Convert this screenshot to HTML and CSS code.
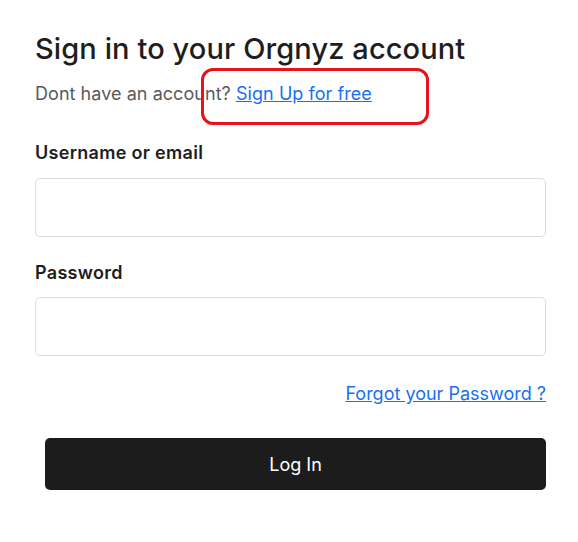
FILE: index.html
```html
<!DOCTYPE html>
<html>
<head>
<meta charset="utf-8">
<link rel="stylesheet" href="styles.css">
</head>
<body>
<main class="page">
  <h1 class="title">Sign in to your Orgnyz account</h1>
  <p class="subtitle">Dont have an account? <a class="link" href="#">Sign Up for free</a></p>
  <div class="highlight"></div>
  <form class="form">
    <label class="label" for="user">Username or email</label>
    <input class="input" id="user" type="text">
    <label class="label" for="pass">Password</label>
    <input class="input input-tight" id="pass" type="password">
    <div class="forgot-row"><a class="link" href="#">Forgot your Password ?</a></div>
    <button class="btn" type="button">Log In</button>
  </form>
</main>
</body>
</html>
```
FILE: styles.css
```css
* { box-sizing: border-box; }
body {
  margin: 0;
  background: #fff;
  font-family: Inter, "Noto Sans", sans-serif;
  color: #1e1e1e;
}
.page {
  position: relative;
  width: 511px;
  margin-left: 35px;
  padding-top: 30px;
}
.title {
  margin: 0;
  font-size: 29px;
  font-weight: 500;
  line-height: 38px;
  letter-spacing: 0.1px;
  color: #1e1e1e;
}
.subtitle {
  margin: 14px 0 0;
  font-size: 18px;
  line-height: 24px;
  letter-spacing: 0.05px;
  color: #5a5a5a;
}
.link {
  color: #1a6ff0;
  text-decoration: underline;
}
.highlight {
  position: absolute;
  left: 166px;
  top: 68px;
  width: 228px;
  height: 57px;
  border: 3px solid #e8121b;
  border-radius: 12px;
}
.form {
  display: flex;
  flex-direction: column;
  margin-top: 35px;
}
.label {
  font-size: 18px;
  font-weight: 600;
  line-height: 24px;
  letter-spacing: 0.3px;
  color: #1e1e1e;
}
.input {
  margin-top: 13px;
  margin-bottom: 24px;
  height: 59px;
  border: 1px solid #dcdce0;
  border-radius: 5px;
  font-size: 18px;
  padding: 0 14px;
}
.input-tight {
  margin-top: 12px;
}
.forgot-row {
  display: flex;
  justify-content: flex-end;
  font-size: 18px;
  line-height: 24px;
  margin-top: 2px;
}
.btn {
  margin-top: 32px;
  margin-left: 10px;
  height: 52px;
  background: #1c1c1c;
  color: #fff;
  border: 0;
  border-radius: 5px;
  font-family: Inter, "Noto Sans", sans-serif;
  font-size: 18px;
}
```
